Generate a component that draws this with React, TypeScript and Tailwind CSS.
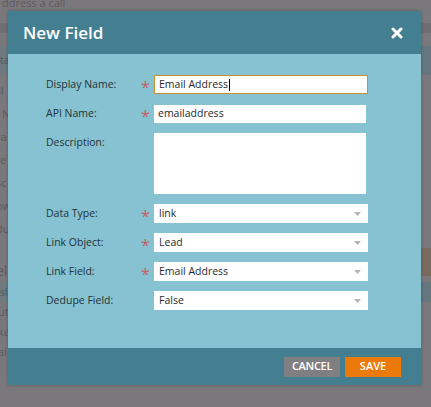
import type { ReactNode } from "react";

const font = { fontFamily: '"Open Sans", "Liberation Sans", sans-serif' };

function Caret() {
	return (
		<svg
			width="7"
			height="4"
			viewBox="0 0 7 4"
			className="absolute right-[7px] top-1/2 -translate-y-1/2"
		>
			<path d="M0 0 H7 L3.5 4 Z" fill="#b5b5b5" />
		</svg>
	);
}

function FieldRow({
	label,
	required,
	top,
	children,
}: {
	label: string;
	required?: boolean;
	top?: boolean;
	children: ReactNode;
}) {
	return (
		<div className={`flex ${top ? "items-start" : "items-center"}`}>
			<div
				className={`w-[95px] text-[10.5px] leading-[15px] text-[#233338] ${top ? "pt-[2px]" : ""}`}
			>
				{label}
			</div>
			<div className="h-[19px] w-[13px] overflow-visible pt-[4px] text-[16px] leading-none text-[#c4605e]">
				{required ? "*" : ""}
			</div>
			{children}
		</div>
	);
}

function SelectBox({ value }: { value: string }) {
	return (
		<div className="relative flex h-[19px] w-[214px] items-center bg-white pl-[5px] text-[10.5px] text-[#1f2a2e]">
			{value}
			<Caret />
		</div>
	);
}

export default function App() {
	return (
		<div
			className="relative h-[407px] w-[431px] overflow-hidden bg-[#7b787c]"
			style={font}
		>
			{/* dimmed page behind the dialog */}
			<div className="flex flex-col">
				<div className="h-[8px] pl-[2px] text-[11px] leading-[6px] text-[#5b585c]">
					ddress a call
				</div>
				<div className="mt-[15px] flex h-[10px] justify-between">
					<div className="w-[20px] bg-[#6f6d71]" />
					<div className="w-[33px] bg-[#6f6d71]" />
				</div>
				<div className="mt-[13px] flex h-[29px] justify-between">
					<div className="w-[10px] bg-[#6f7b80] text-[10px] leading-[29px] text-[#4e5a5e]">
						ta
					</div>
					<div className="w-[14px] bg-[#65767e]" />
				</div>
				<div className="flex flex-col text-[11px] leading-[23px] text-[#5a585c]">
					<span className="-ml-[6px] mt-[4px]">pl</span>
					<span className="ml-[2px]">N</span>
					<span className="-ml-[4px]">ra</span>
					<span className="-ml-[4px]">te</span>
					<span className="-ml-[4px]">sc</span>
					<span className="-ml-[4px]">ow</span>
					<span className="-ml-[4px]">du</span>
				</div>
				<div className="mt-[22px] flex justify-between">
					<span className="-ml-[4px] text-[14px] leading-[18px] text-[#5a585c]">
						elc
					</span>
					<div className="mt-[-14px] h-[28px] w-[10px] bg-[#7c6a5e]" />
				</div>
				<div className="mt-[2px] flex h-[20px] justify-between">
					<div className="w-[10px] bg-[#6f7b80] text-[10px] leading-[20px] text-[#4e5a5e]">
						sla
					</div>
					<div className="w-[14px] bg-[#65767e]" />
				</div>
				<div className="flex flex-col text-[11px] leading-[20px] text-[#5a585c]">
					<span className="-ml-[2px]">ute</span>
					<span className="-ml-[2px]">ke</span>
					<span className="-ml-[2px]">ai</span>
				</div>
			</div>

			{/* dialog */}
			<div className="absolute left-[8px] top-[11px] flex w-[413px] flex-col shadow-[0_0_3px_rgba(0,0,0,0.25)]">
				<div className="flex h-[43px] items-center justify-between bg-[#437f91] pl-[15px] pr-[18px]">
					<span className="text-[17px] font-semibold text-white">New Field</span>
					<svg width="12" height="12" viewBox="0 0 12 12">
						<path
							d="M2 2 L10 10 M10 2 L2 10"
							stroke="white"
							strokeWidth="3"
							strokeLinecap="round"
						/>
					</svg>
				</div>

				<div className="flex h-[294px] flex-col gap-[10px] bg-[#86c2d2] pl-[38px] pt-[21px]">
					<FieldRow label="Display Name:" required>
						<div className="flex h-[19px] w-[214px] items-center border border-[#c8912f] bg-white pl-[4px] text-[10.5px] text-[#1f2a2e]">
							Email Address
							<span className="ml-[1px] h-[12px] w-px bg-black" />
						</div>
					</FieldRow>
					<FieldRow label="API Name:" required>
						<div className="flex h-[18px] w-[212px] items-center bg-white pl-[4px] text-[10.5px] text-[#1f2a2e]">
							emailaddress
						</div>
					</FieldRow>
					<FieldRow label="Description:" top>
						<div className="h-[61px] w-[212px] bg-white" />
					</FieldRow>
					<FieldRow label="Data Type:" required>
						<SelectBox value="link" />
					</FieldRow>
					<FieldRow label="Link Object:" required>
						<SelectBox value="Lead" />
					</FieldRow>
					<FieldRow label="Link Field:" required>
						<SelectBox value="Email Address" />
					</FieldRow>
					<FieldRow label="Dedupe Field:">
						<SelectBox value="False" />
					</FieldRow>
				</div>

				<div className="flex h-[37px] items-center justify-end gap-[5px] bg-[#437f91] pr-[20px]">
					<button
						type="button"
						className="flex h-[20px] w-[56px] items-center justify-center bg-[#7f7e81] text-[11px] font-semibold tracking-[-0.3px] text-white"
					>
						CANCEL
					</button>
					<button
						type="button"
						className="flex h-[20px] w-[56px] items-center justify-center bg-[#ec7a0a] text-[11px] font-semibold text-white"
					>
						SAVE
					</button>
				</div>
			</div>
		</div>
	);
}
